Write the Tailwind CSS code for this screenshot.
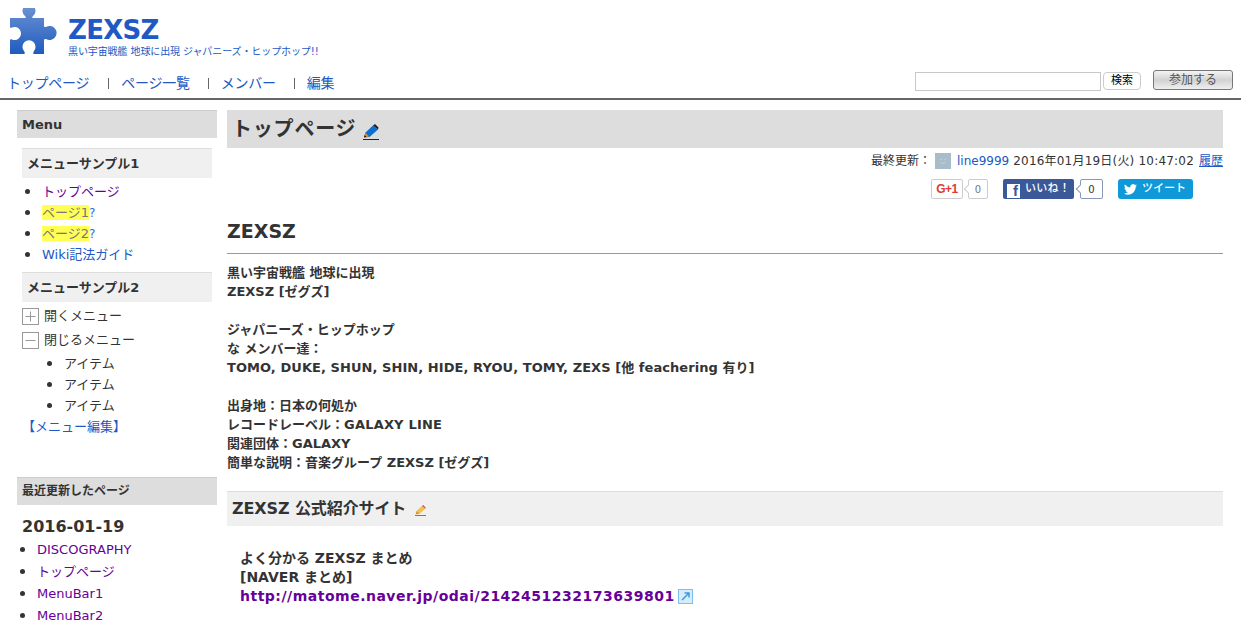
<!DOCTYPE html>
<html lang="ja"><head><meta charset="utf-8"><script src="https://cdn.jsdelivr.net/npm/@tailwindcss/browser@4"></script></head>
<body class="bg-white text-[#333] overflow-hidden h-[639px] font-['DejaVu_Sans','Noto_Sans_CJK_JP',sans-serif] text-[13px]">
<header class="h-[100px] border-b-2 border-[#666] flex flex-col">
  <div class="flex h-[65px] pl-[9px] pt-[8px]">
    <svg width="48" height="47" viewBox="9 8 48 47" class="shrink-0"><defs><linearGradient id="g" x1="0" y1="0" x2="0" y2="1"><stop offset="0" stop-color="#6f94d2"/><stop offset="1" stop-color="#1f5bbf"/></linearGradient></defs><path fill="url(#g)" d="M10 18H25C26 18 26 17 25 16A6.500 6.500 0 1 1 33 16C32 17 32 18 33 18H44V26C44 27 45 27 46 27A7 7 0 1 1 46 39C45 39 44 39 44 40V54H34C33 54 33 52 34 51A6.500 6.500 0 1 0 24 51C25 52 25 54 24 54H10V40C10 39 11 39 12 39.500A6.500 6.500 0 1 0 12 27.500C11 28 10 28 10 27Z"/></svg>
    <div class="ml-[11px] text-[#2059c3]">
      <div class="text-[26px] leading-[30px] font-bold mt-[7px] tracking-[-0.7px]">ZEXSZ</div>
      <div class="text-[10px] leading-[14px] tracking-[-0.1px]">黒い宇宙戦艦 地球に出現 ジャパニーズ・ヒップホップ!!</div>
    </div>
  </div>
  <nav class="flex items-start justify-between pl-[7px] pr-[8px] h-[33px]">
    <ul class="flex text-[14px] text-[#2059c3] leading-[20px] pt-[8px] tracking-[-0.25px]">
      <li>トップページ</li>
      <li class="ml-[19px] pl-[13px] relative"><span class="absolute left-0 top-[5px] h-[11px] w-px bg-[#666]"></span>ページ一覧</li>
      <li class="ml-[18px] pl-[13px] relative"><span class="absolute left-0 top-[5px] h-[11px] w-px bg-[#666]"></span>メンバー</li>
      <li class="ml-[18px] pl-[13px] relative"><span class="absolute left-0 top-[5px] h-[11px] w-px bg-[#666]"></span>編集</li>
    </ul>
    <div class="flex items-start">
      <div class="w-[186px] h-[19px] border border-[#c8c8c8] mt-[7px] bg-white"></div>
      <button class="ml-[2px] mt-[7px] w-[38px] h-[18px] border border-[#ccc] rounded-[4px] bg-white text-[11px] leading-[16px] text-black">検索</button>
      <button class="ml-[12px] mt-[5px] w-[80px] h-[20px] border border-[#777] rounded-[3px] bg-linear-to-b from-[#f4f4f4] via-[#d2d2d2] to-[#efefef] text-[12px] leading-[18px] text-[#555]">参加する</button>
    </div>
  </nav>
</header>
<div class="flex pl-[17px] pr-[18px] pt-[10px]">
  <aside class="w-[200px] shrink-0">
    <h2 class="h-[28px] bg-[#ddd] border-t border-[#ccc] pl-[5px] text-[13px] leading-[27px] font-bold">Menu</h2>
    <div class="px-[5px] pt-[10px]">
      <h3 class="h-[30px] bg-[#f0f0f0] border-t border-[#ddd] pl-[5px] text-[13px] leading-[29px] font-bold">メニューサンプル1</h3>
      <ul class="list-disc pl-[20px] pt-[2px] text-[#333] marker:text-[17px] [&>li]:h-[21px] [&>li]:leading-[21px]">
        <li><span class="text-[#660099]">トップページ</span></li>
        <li><span class="bg-[#ffff55] text-[#777]">ページ1</span><span class="text-[#2a6ee0] text-[12px]">?</span></li>
        <li><span class="bg-[#ffff55] text-[#777]">ページ2</span><span class="text-[#2a6ee0] text-[12px]">?</span></li>
        <li><span class="text-[#2059c3]">Wiki記法ガイド</span></li>
      </ul>
      <h3 class="mt-[8px] h-[30px] bg-[#f0f0f0] border-t border-[#ddd] pl-[5px] text-[13px] leading-[29px] font-bold">メニューサンプル2</h3>
      <div class="flex items-center mt-[2px] h-[24px]">
        <svg width="17" height="17" viewBox="0 0 17 17" class="shrink-0"><rect x=".5" y=".5" width="16" height="16" fill="#fff" stroke="#999"/><path d="M3.500 8.500H13.500M8.500 3.500V13.500" stroke="#999"/></svg>
        <span class="ml-[5px]">開くメニュー</span>
      </div>
      <div class="flex items-center h-[24px]">
        <svg width="17" height="17" viewBox="0 0 17 17" class="shrink-0"><rect x=".5" y=".5" width="16" height="16" fill="#fff" stroke="#999"/><path d="M3.500 8.500H13.500" stroke="#999"/></svg>
        <span class="ml-[5px]">閉じるメニュー</span>
      </div>
      <ul class="list-disc pl-[42px] marker:text-[17px] [&>li]:h-[21px] [&>li]:leading-[21px]">
        <li>アイテム</li><li>アイテム</li><li>アイテム</li>
      </ul>
      <div class="mt-[1px] leading-[21px] text-[#2059c3]">【メニュー編集】</div>
    </div>
    <h2 class="mt-[40px] h-[28px] bg-[#ddd] border-t border-[#ccc] pl-[5px] text-[12px] leading-[27px] font-bold">最近更新したページ</h2>
    <div class="pl-[5px]">
      <div class="mt-[11px] text-[16px] leading-[22px] font-bold">2016-01-19</div>
      <ul class="list-disc pl-[15px] text-[#333] -mt-[1px] marker:text-[17px] [&>li]:h-[22px] [&>li]:leading-[22px]">
        <li><span class="text-[#660099]">DISCOGRAPHY</span></li>
        <li><span class="text-[#660099]">トップページ</span></li>
        <li><span class="text-[#660099]">MenuBar1</span></li>
        <li><span class="text-[#660099]">MenuBar2</span></li>
      </ul>
    </div>
  </aside>
  <main class="ml-[10px] flex-1 min-w-0">
    <h1 class="h-[38px] bg-[#ddd] pl-[5px] flex items-center text-[20px] font-bold tracking-[0.8px]">トップページ
      <svg width="16" height="16" viewBox="0 0 16 16" class="ml-[7px] mt-[6px]"><path d="M0 15.500H16" stroke="#222"/><path d="M1 13.500L2.500 8.500L10 1.500L15 5.500L6.500 13Z" fill="#0a6fd0"/><path d="M1 13.500L2.500 9L6 12.500Z" fill="#e98a3a"/><path d="M1 13.500L1.800 11L3.500 12.800Z" fill="#111"/><path d="M10 1.500L12 0L15.500 3.500L15 5.500Z" fill="#222"/></svg>
    </h1>
    <div class="flex justify-end items-center h-[24px] text-[12px] mt-[1px]">
      <span>最終更新：</span>
      <span class="w-[16px] h-[16px] bg-[#a9bcc9] ml-[4px] mr-[6px] flex items-center justify-center"><svg width="10" height="10" viewBox="0 0 10 10"><circle cx="3" cy="3.500" r=".8" fill="#c4d2db"/><circle cx="7" cy="3.500" r=".8" fill="#c4d2db"/><path d="M2.500 6.500Q5 8.500 7.500 6.500" stroke="#c4d2db" fill="none"/></svg></span>
      <span class="text-[#2059c3]">line9999</span>
      <span class="ml-[4px] tracking-[0.2px]">2016年01月19日(火) 10:47:02</span>
      <span class="ml-[5px] text-[#2059c3] underline">履歴</span>
    </div>
    <div class="flex h-[21px] pl-[704px] mt-[6px] text-[11px]">
      <div class="w-[32px] h-[20px] border border-[#ccc] rounded-[2px] flex items-center justify-center text-[#dd3c34] font-bold text-[12px] tracking-[-0.5px] font-['Liberation_Sans',sans-serif]">G+1</div>
      <div class="relative ml-[5px] w-[20px] h-[20px] border border-[#ccc] rounded-[2px] flex items-center justify-center text-[#777] text-[10px]"><span class="absolute -left-[4px] top-[6px] w-[6px] h-[6px] rotate-45 bg-white border-l border-b border-[#ccc]"></span>0</div>
      <div class="ml-[15px] w-[71px] h-[20px] bg-[#3b5998] rounded-[2px] flex items-center text-white text-[11px] font-medium">
        <span class="ml-[4px] w-[13px] h-[14px] mt-[3px] bg-white text-[#3b5998] flex items-end justify-end pr-[2px] text-[15px] leading-[14px] font-bold font-['Liberation_Sans',sans-serif]">f</span>
        <span class="ml-[5px] tracking-[0.3px]">いいね！</span>
      </div>
      <div class="relative ml-[6px] w-[23px] h-[20px] border border-[#8a97b5] rounded-[2px] flex items-center justify-center text-[#333] text-[10px]"><span class="absolute -left-[4px] top-[6px] w-[6px] h-[6px] rotate-45 bg-white border-l border-b border-[#8a97b5]"></span>0</div>
      <div class="ml-[15px] w-[75px] h-[20px] bg-[#0f99d9] rounded-[3px] flex items-center text-white text-[11px] font-medium">
        <svg width="13" height="11" viewBox="0 0 24 20" class="ml-[6px]"><path fill="#fff" d="M24 2.400a10 10 0 0 1-2.800.8A5 5 0 0 0 23.300.5a10 10 0 0 1-3.100 1.200 4.900 4.900 0 0 0-8.400 4.500A14 14 0 0 1 1.700.9a4.900 4.900 0 0 0 1.500 6.600 4.900 4.900 0 0 1-2.200-.6c0 2.400 1.700 4.400 3.900 4.900a5 5 0 0 1-2.200.1 4.900 4.900 0 0 0 4.600 3.400A10 10 0 0 1 0 17.300 14 14 0 0 0 7.500 19.500c9.100 0 14.300-7.700 14-14.600A10 10 0 0 0 24 2.400Z"/></svg>
        <span class="ml-[5px]">ツイート</span>
      </div>
    </div>
    <h2 class="mt-[16px] h-[38px] border-b border-[#999] text-[19px] leading-[30px] font-bold">ZEXSZ</h2>
    <div class="mt-[9px] font-bold leading-[19px]">
      <p>黒い宇宙戦艦 地球に出現<br>ZEXSZ [ゼグズ]</p>
      <p class="mt-[19px]">ジャパニーズ・ヒップホップ<br>な メンバー達：<br><span class="tracking-[0.06px]">TOMO, DUKE, SHUN, SHIN, HIDE, RYOU, TOMY, ZEXS [他 feachering 有り]</span></p>
      <p class="mt-[19px]">出身地：日本の何処か<br>レコードレーベル：<span class="tracking-[0.2px]">GALAXY LINE</span><br>関連団体：GALAXY<br>簡単な説明：音楽グループ ZEXSZ [ゼグズ]</p>
    </div>
    <h3 class="mt-[19px] h-[35px] bg-[#f0f0f0] border-t border-[#ddd] pl-[5px] flex items-center text-[16px] font-bold tracking-[-0.1px]">ZEXSZ 公式紹介サイト
      <svg width="11" height="11" viewBox="0 0 16 16" class="ml-[9px] mt-[3px]"><path d="M0 15.500H16" stroke="#222"/><path d="M1 13.500L2.500 8.500L10 1.500L15 5.500L6.500 13Z" fill="#f2c14e"/><path d="M1 13.500L2.500 9L6 12.500Z" fill="#e9803a"/><path d="M10 1.500L12 0L15.500 3.500L15 5.500Z" fill="#d9534f"/></svg>
    </h3>
    <div class="mt-[23px] pl-[13px] font-bold leading-[19px] text-[14px]">
      <p>よく分かる ZEXSZ まとめ<br>[NAVER まとめ]</p>
      <p class="flex items-center text-[#660099] tracking-[0.5px]">http://matome.naver.jp/odai/2142451232173639801
        <svg width="15" height="15" viewBox="0 0 15 15" class="ml-[3px]"><rect x=".5" y=".5" width="14" height="14" fill="#d7ecfb" stroke="#7cc0ee"/><path d="M4 11L11 4M6.500 4H11V8.500" stroke="#3d9be0" stroke-width="1.500" fill="none"/></svg>
      </p>
    </div>
  </main>
</div>
</body></html>
